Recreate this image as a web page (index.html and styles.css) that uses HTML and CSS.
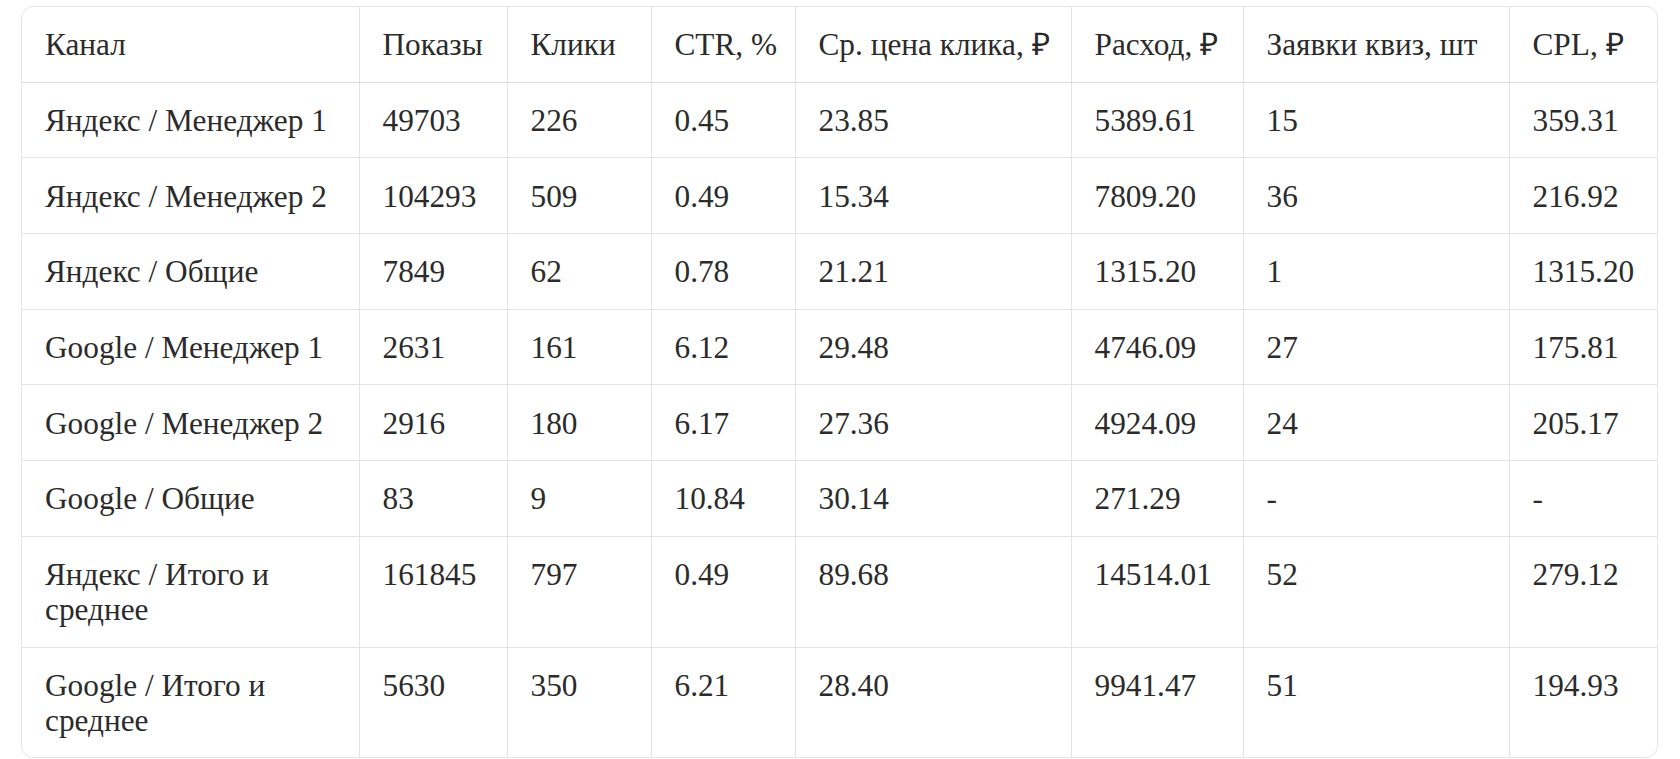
FILE: index.html
```html
<!DOCTYPE html>
<html lang="ru">
<head>
<meta charset="utf-8">
<title>Таблица</title>
<link rel="stylesheet" href="styles.css">
</head>
<body>
<div class="table-wrap">
  <table class="report">
    <colgroup>
      <col class="c-channel">
      <col class="c-shows">
      <col class="c-clicks">
      <col class="c-ctr">
      <col class="c-cpc">
      <col class="c-spend">
      <col class="c-leads">
      <col class="c-cpl">
    </colgroup>
    <thead>
      <tr>
        <th>Канал</th>
        <th>Показы</th>
        <th>Клики</th>
        <th>CTR, %</th>
        <th>Ср. цена клика, ₽</th>
        <th>Расход, ₽</th>
        <th>Заявки квиз, шт</th>
        <th>CPL, ₽</th>
      </tr>
    </thead>
    <tbody>
      <tr><td>Яндекс / Менеджер 1</td><td>49703</td><td>226</td><td>0.45</td><td>23.85</td><td>5389.61</td><td>15</td><td>359.31</td></tr>
      <tr><td>Яндекс / Менеджер 2</td><td>104293</td><td>509</td><td>0.49</td><td>15.34</td><td>7809.20</td><td>36</td><td>216.92</td></tr>
      <tr><td>Яндекс / Общие</td><td>7849</td><td>62</td><td>0.78</td><td>21.21</td><td>1315.20</td><td>1</td><td>1315.20</td></tr>
      <tr><td>Google / Менеджер 1</td><td>2631</td><td>161</td><td>6.12</td><td>29.48</td><td>4746.09</td><td>27</td><td>175.81</td></tr>
      <tr><td>Google / Менеджер 2</td><td>2916</td><td>180</td><td>6.17</td><td>27.36</td><td>4924.09</td><td>24</td><td>205.17</td></tr>
      <tr><td>Google / Общие</td><td>83</td><td>9</td><td>10.84</td><td>30.14</td><td>271.29</td><td>-</td><td>-</td></tr>
      <tr><td>Яндекс / Итого и<br>среднее</td><td>161845</td><td>797</td><td>0.49</td><td>89.68</td><td>14514.01</td><td>52</td><td>279.12</td></tr>
      <tr><td>Google / Итого и<br>среднее</td><td>5630</td><td>350</td><td>6.21</td><td>28.40</td><td>9941.47</td><td>51</td><td>194.93</td></tr>
    </tbody>
  </table>
</div>
</body>
</html>
```

FILE: styles.css
```css
html, body {
  background: #ffffff;
}

body {
  margin: 6px 22px 0 21px;
  font-family: "Liberation Serif", "Times New Roman", serif;
  color: #2b2b2b;
}

.table-wrap {
  border: 1px solid #e6e6e6;
  border-radius: 12px;
  overflow: hidden;
}

.report {
  width: 100%;
  border-collapse: collapse;
  table-layout: fixed;
}

.c-channel { width: 337px; }
.c-shows { width: 148px; }
.c-clicks { width: 144px; }
.c-ctr { width: 144px; }
.c-cpc { width: 276px; }
.c-spend { width: 172px; }
.c-leads { width: 266px; }
.c-cpl { width: 148px; }

.report th,
.report td {
  padding: 20.3px 6px 19.4px 23px;
  font-size: 31.3px;
  line-height: 35px;
  font-weight: normal;
  text-align: left;
  vertical-align: top;
  border-right: 1px solid #e3e3e3;
  border-bottom: 1px solid #e3e3e3;
  white-space: nowrap;
}

.report th {
  border-bottom-color: #dcdcdc;
}

.report th:last-child,
.report td:last-child {
  border-right: none;
}

.report tbody tr:last-child td {
  border-bottom: none;
}
```
